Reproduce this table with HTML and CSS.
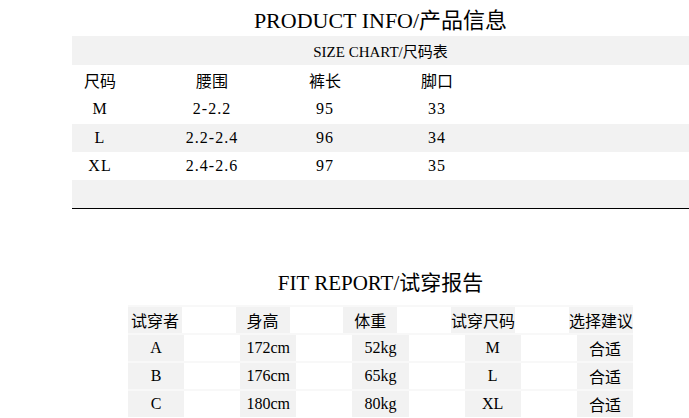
FILE: index.html
```html
<!DOCTYPE html>
<html lang="zh">
<head>
<meta charset="utf-8">
<title>Product Info</title>
<link rel="stylesheet" href="styles.css">
</head>
<body>
<div class="page">
  <h1 class="title">PRODUCT INFO/产品信息</h1>
  <div class="size">
    <div class="band">SIZE CHART/尺码表</div>
    <div class="srow"><span>尺码</span><span>腰围</span><span>裤长</span><span>脚口</span></div>
    <div class="srow tall data"><span>M</span><span>2-2.2</span><span>95</span><span>33</span></div>
    <div class="srow short shade data"><span>L</span><span>2.2-2.4</span><span>96</span><span>34</span></div>
    <div class="srow short data"><span>XL</span><span>2.4-2.6</span><span>97</span><span>35</span></div>
    <div class="srow short shade"></div>
  </div>

  <h2 class="fit-title">FIT REPORT/试穿报告</h2>
  <div class="fit">
    <div class="frow"><div>试穿者</div><div></div><div>身高</div><div></div><div>体重</div><div></div><div>试穿尺码</div><div></div><div>选择建议</div></div>
    <div class="frow"><div>A</div><div></div><div>172cm</div><div></div><div>52kg</div><div></div><div>M</div><div></div><div>合适</div></div>
    <div class="frow"><div>B</div><div></div><div>176cm</div><div></div><div>65kg</div><div></div><div>L</div><div></div><div>合适</div></div>
    <div class="frow"><div>C</div><div></div><div>180cm</div><div></div><div>80kg</div><div></div><div>XL</div><div></div><div>合适</div></div>
  </div>
</div>
</body>
</html>
```
FILE: styles.css
```css
html, body {
  margin: 0;
  padding: 0;
  background: #fff;
}

body {
  font-family: "Liberation Serif", "Noto Sans CJK SC", serif;
  color: #000;
  font-size: 16px;
}

.page {
  padding-left: 72px;
}

.title {
  margin: 0;
  height: 36px;
  display: flex;
  align-items: center;
  justify-content: center;
  font-size: 22px;
  font-weight: normal;
}

.size {
  border-bottom: 1px solid #000;
}

.band {
  height: 29px;
  background: #f2f2f2;
  display: flex;
  align-items: center;
  justify-content: center;
  font-size: 15px;
}

.srow {
  display: grid;
  grid-template-columns: 56px 168px 58px 166px 1fr;
  align-items: center;
  height: 29px;
  font-size: 16px;
}

.srow span {
  text-align: center;
  white-space: nowrap;
}

.srow.data span {
  letter-spacing: 1px;
}

.srow.tall {
  height: 30px;
}

.srow.short {
  height: 28px;
}

.srow.shade {
  background: #f2f2f2;
}

.fit-title {
  margin: 57px 0 0;
  height: 30px;
  display: flex;
  align-items: center;
  justify-content: center;
  font-size: 21px;
  font-weight: normal;
}

.fit {
  margin: 9px 0 0 56px;
  width: 505px;
}

.frow {
  display: grid;
  grid-template-columns: repeat(9, 1fr);
  height: 28px;
  box-sizing: border-box;
  border-top: 2px solid #f8f8f8;
  background: #fff;
}

.frow > div {
  display: flex;
  align-items: center;
  justify-content: center;
  white-space: nowrap;
  font-size: 16px;
}

.frow > div:nth-child(odd) {
  background: #f2f2f2;
}
```
